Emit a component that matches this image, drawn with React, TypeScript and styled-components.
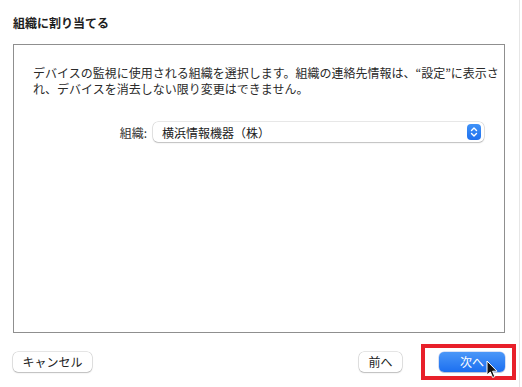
import React from "react";
import styled, { createGlobalStyle } from "styled-components";

const Global = createGlobalStyle`
  html, body { margin: 0; padding: 0; background: #ffffff; }
  body { font-family: "Noto Sans CJK JP", "Noto Sans", "Liberation Sans", sans-serif; color: #222; }
`;

const Window = styled.div`
  position: relative;
  box-sizing: border-box;
  width: 520px;
  height: 387px;
  padding: 0 14px 0 13px;
  border-right: 1px solid #e6e6e6;
  display: flex;
  flex-direction: column;
  overflow: hidden;
`;

const Title = styled.div`
  margin-top: 15px;
  font-size: 12px;
  line-height: 16px;
  font-weight: 700;
  color: #1e1e1e;
`;

const Panel = styled.div`
  box-sizing: border-box;
  margin-top: 13px;
  height: 289px;
  border: 1px solid #8f8f8f;
  padding: 20px 19px;
  display: flex;
  flex-direction: column;
`;

const Desc = styled.p`
  margin: 0;
  font-size: 12px;
  line-height: 16px;
  color: #2a2a2a;
  white-space: nowrap;
`;

const FieldRow = styled.div`
  margin-top: 25px;
  display: flex;
  align-items: center;
  gap: 6px;
`;

const Label = styled.span`
  flex-shrink: 0;
  width: 114px;
  text-align: right;
  white-space: nowrap;
  font-size: 12px;
  color: #333;
`;

const Select = styled.div`
  box-sizing: border-box;
  flex-shrink: 0;
  width: 331px;
  height: 20px;
  border-radius: 5px;
  background: #fff;
  box-shadow: 0 0 0 0.5px rgba(0, 0, 0, 0.18), 0 1px 1.5px rgba(0, 0, 0, 0.18);
  display: flex;
  align-items: center;
  justify-content: space-between;
  padding: 0 3px 0 9px;
  font-size: 12px;
  color: #222;
`;

const Stepper = styled.span`
  width: 14px;
  height: 16px;
  border-radius: 4px;
  background: linear-gradient(#3f92f8, #1f70ee);
  display: flex;
  align-items: center;
  justify-content: center;
`;

const Footer = styled.div`
  margin-top: 19px;
  display: flex;
  align-items: center;
`;

const Button = styled.button<{ $primary?: boolean; $width: number }>`
  box-sizing: border-box;
  width: ${(p) => p.$width}px;
  height: 20px;
  border: none;
  border-radius: 5px;
  font-family: inherit;
  font-size: 12px;
  padding: 0;
  line-height: 20px;
  color: ${(p) => (p.$primary ? "#fff" : "#222")};
  background: ${(p) =>
    p.$primary ? "linear-gradient(#4a97f8, #1c6ff0)" : "#fff"};
  box-shadow: ${(p) =>
    p.$primary
      ? "0 0 0 0.5px rgba(0,60,200,0.3), 0 1px 1px rgba(0,0,0,0.15)"
      : "0 0 0 0.5px rgba(0,0,0,0.2), 0 1px 1.5px rgba(0,0,0,0.18)"};
`;

const Spacer = styled.div`
  flex: 1;
`;

const NextGap = styled.div`
  width: 37px;
`;

const Highlight = styled.div`
  position: absolute;
  left: 421px;
  top: 344px;
  width: 95px;
  height: 36px;
  box-sizing: border-box;
  border: 4px solid #e8202a;
  pointer-events: none;
`;

const Cursor = styled.svg`
  position: absolute;
  left: 486px;
  top: 360px;
`;

export default function App() {
  return (
    <>
      <Global />
      <Window>
        <Title>組織に割り当てる</Title>
        <Panel>
          <Desc>デバイスの監視に使用される組織を選択します。組織の連絡先情報は、“設定”に表示さ</Desc>
          <Desc>れ、デバイスを消去しない限り変更はできません。</Desc>
          <FieldRow>
            <Label>組織:</Label>
            <Select>
              <span>横浜情報機器（株）</span>
              <Stepper>
                <svg width="8" height="12" viewBox="0 0 8 12">
                  <path d="M1.5 4.5 L4 2 L6.5 4.5 M1.5 7.5 L4 10 L6.5 7.5" fill="none" stroke="#fff" strokeWidth="1.4" strokeLinecap="round" strokeLinejoin="round" />
                </svg>
              </Stepper>
            </Select>
          </FieldRow>
        </Panel>
        <Footer>
          <Button $width={79}>キャンセル</Button>
          <Spacer />
          <Button $width={43}>前へ</Button>
          <NextGap />
          <Button $primary $width={66}>次へ</Button>
        </Footer>
        <Highlight />
        <Cursor width="13" height="20" viewBox="0 0 13 20">
          <path d="M1 1 L1 15 L4.3 12 L6.6 17.5 L8.8 16.6 L6.6 11.2 L11 11.2 Z" fill="#111" stroke="#fff" strokeWidth="1" strokeLinejoin="round" />
        </Cursor>
      </Window>
    </>
  );
}
